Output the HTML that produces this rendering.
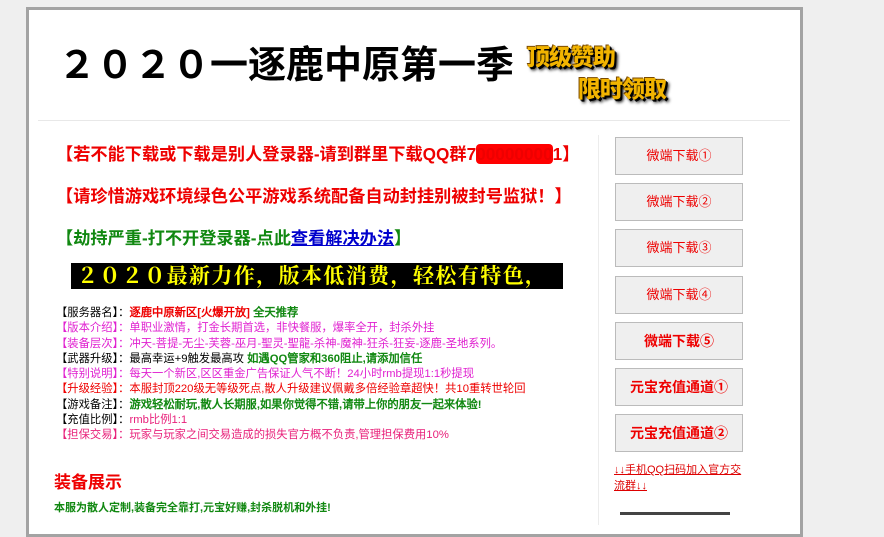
<!DOCTYPE html>
<html><head><meta charset="utf-8"><style>
*{margin:0;padding:0;box-sizing:border-box}
body{width:884px;height:518px;overflow:hidden;background:#efefef;font-family:"Liberation Sans","Noto Sans CJK SC",sans-serif;position:relative}
.box{position:absolute;left:26px;top:7px;width:777px;height:530px;border:3px solid #a3a3a3;background:#fff}
.abs{position:absolute;white-space:nowrap}
.title{left:58px;top:34px;font-size:38px;font-weight:bold;color:#000;letter-spacing:0px}
.hr{left:38px;top:120px;width:752px;height:1px;background:#e8e8e8}
.vr{left:598px;top:135px;width:1px;height:390px;background:#ececec}
.l{font-size:17.2px;font-weight:bold;left:56px}
.banner{left:71px;top:263px;width:492px;height:26px;background:#000;color:#ff0;font-family:"Liberation Serif","Noto Serif CJK SC",serif;font-weight:bold;font-size:21px;line-height:26px;padding-left:6px;letter-spacing:1.4px}
.info{left:56px;top:306px;font-size:11.3px;line-height:15.3px;font-family:"Liberation Sans","WenQuanYi Zen Hei",sans-serif}
.btn{position:absolute;left:615px;width:128px;height:38px;border:1px solid #bbb;background:#efefef;color:#e00;font-size:13px;text-align:center;line-height:36px}
.b{font-weight:bold;font-size:14px}
.r{color:#e00}.p{color:#e020d0}.g{color:#118811}.k{color:#000}.m{color:#e8207a}
.gold{font-size:23px;font-weight:900;color:#f2b400;text-shadow:1px 1px 0 #000,2px 2px 0 #000,-1px -1px 0 #7a4a00,3px 3px 3px #000;letter-spacing:-1px}
</style></head><body>
<div class="box"></div>
<div class="abs title">２０２０一逐鹿中原第一季</div>
<div class="abs gold" style="left:527px;top:38px">顶级赞助</div>
<div class="abs gold" style="left:578px;top:70px">限时领取</div>
<div class="abs hr"></div>
<div class="abs vr"></div>
<div class="abs l r" style="top:140px">【若不能下载或下载是别人登录器-请到群里下载QQ群7<span style="background:#f00;border-radius:4px">00000000</span>1】</div>
<div class="abs l r" style="top:182px">【请珍惜游戏环境绿色公平游戏系统配备自动封挂别被封号监狱！】</div>
<div class="abs l g" style="top:224px">【劫持严重-打不开登录器-点此<span style="color:#00c;text-decoration:underline">查看解决办法</span>】</div>
<div class="abs banner">２０２０最新力作，版本低消费，轻松有特色，</div>
<div class="abs info">
<div class="k">【服务器名】：<b class="r">逐鹿中原新区[火爆开放]</b> <b class="g">全天推荐</b></div>
<div class="p">【版本介绍】：单职业激情，打金长期首选，非快餐服，爆率全开，封杀外挂</div>
<div class="p">【装备层次】：冲天-菩提-无尘-芙蓉-巫月-聖灵-聖龍-杀神-魔神-狂杀-狂妄-逐鹿-圣地系列。</div>
<div class="k">【武器升级】：最高幸运+9触发最高攻 <b class="g">如遇QQ管家和360阻止,请添加信任</b></div>
<div class="p">【特别说明】：每天一个新区,区区重金广告保证人气不断！24小时rmb提现1:1秒提现</div>
<div class="r">【升级经验】：本服封顶220级无等级死点,散人升级建议佩戴多倍经验章超快！共10重转世轮回</div>
<div class="k">【游戏备注】：<b class="g">游戏轻松耐玩,散人长期服,如果你觉得不错,请带上你的朋友一起来体验!</b></div>
<div class="k">【充值比例】：<span class="m">rmb比例1:1</span></div>
<div class="m">【担保交易】：玩家与玩家之间交易造成的损失官方概不负责,管理担保费用10%</div>
</div>
<div class="abs r" style="left:54px;top:468px;font-size:17px;font-weight:bold">装备展示</div>
<div class="abs g" style="left:54px;top:499px;font-size:11px;font-weight:bold">本服为散人定制,装备完全靠打,元宝好赚,封杀脱机和外挂!</div>
<div class="btn" style="top:137px">微端下载①</div>
<div class="btn" style="top:183px">微端下载②</div>
<div class="btn" style="top:229px">微端下载③</div>
<div class="btn" style="top:276px">微端下载④</div>
<div class="btn b" style="top:322px">微端下载⑤</div>
<div class="btn b" style="top:368px">元宝充值通道①</div>
<div class="btn b" style="top:414px">元宝充值通道②</div>
<div class="abs" style="left:614px;top:462px;font-size:11px;line-height:16px;color:#d00;text-decoration:underline;white-space:normal;width:130px">↓↓手机QQ扫码加入官方交流群↓↓</div>
<div class="abs" style="left:620px;top:512px;width:110px;height:8px;border-top:3px solid #444"></div>
</body></html>
